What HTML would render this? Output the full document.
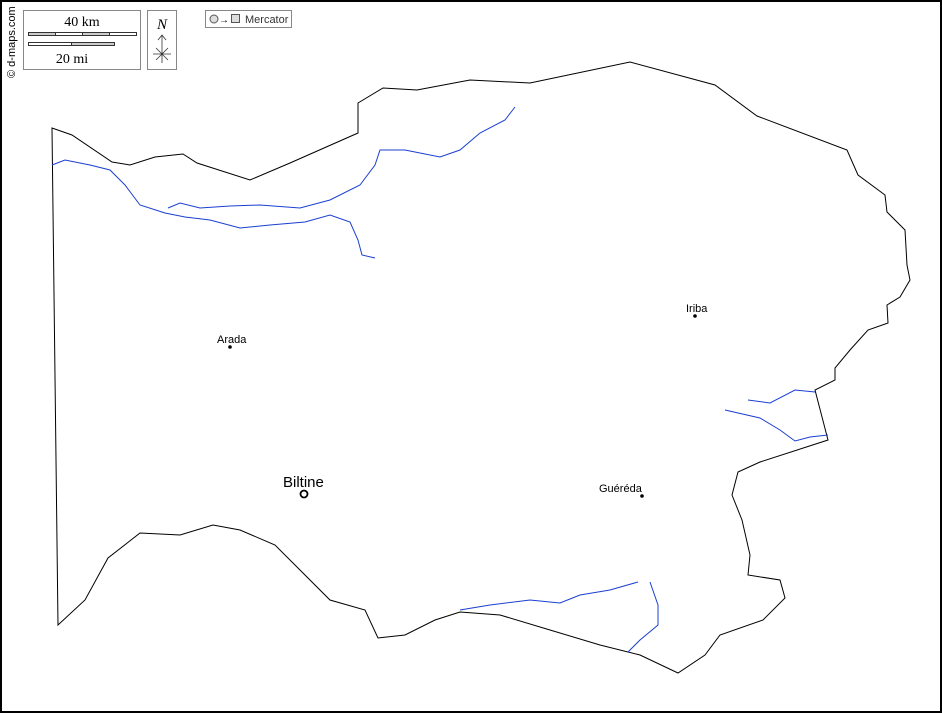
<!DOCTYPE html>
<html><head><style>
html,body{margin:0;padding:0;background:#fff}
svg{display:block}
.s{font-family:"Liberation Sans",sans-serif}
.r{font-family:"Liberation Serif",serif}
</style></head><body>
<svg width="942" height="713" viewBox="0 0 942 713" xmlns="http://www.w3.org/2000/svg">
<rect x="1" y="1" width="940" height="711" fill="#fff" stroke="#000" stroke-width="2"/>
<text class="s" transform="translate(15,78) rotate(-90)" font-size="11" fill="#000">© d-maps.com</text>
<rect x="23.5" y="10.5" width="117" height="59" fill="#fff" stroke="#888"/>
<text class="r" x="82" y="26" font-size="14" text-anchor="middle">40 km</text>
<rect x="28.5" y="32.5" width="108" height="3" fill="#fff" stroke="#333"/>
<rect x="28.5" y="32.5" width="27" height="3" fill="#ccc" stroke="#333"/>
<rect x="82.5" y="32.5" width="27" height="3" fill="#ccc" stroke="#333"/>
<rect x="28.5" y="42.5" width="86" height="3" fill="#fff" stroke="#333"/>
<rect x="71.5" y="42.5" width="43" height="3" fill="#ccc" stroke="#333"/>
<text class="r" x="72" y="63" font-size="14" text-anchor="middle">20 mi</text>
<rect x="147.5" y="10.5" width="29" height="59" fill="#fff" stroke="#888"/>
<text class="r" x="162" y="29" font-size="15" font-style="italic" text-anchor="middle">N</text>
<path d="M162 35V63M158 40L162 35L166 40M153 54L171 54M156 48L168 60M168 48L156 60" stroke="#333" fill="none" stroke-width="0.8"/>
<rect x="205.5" y="10.5" width="86" height="17" fill="#fff" stroke="#888"/>
<circle cx="214" cy="19" r="4" fill="#ddd" stroke="#555"/>
<text class="s" x="219" y="23" font-size="10">→</text>
<rect x="231.5" y="14.5" width="8" height="8" fill="#ddd" stroke="#555"/>
<text class="s" x="245" y="23" font-size="11" fill="#333">Mercator</text>
<path d="M52 128L72 135L112 162L130 165L155 157L183 154L197 163L250 180L290 163L358 133L358 103L383 88L417 90L470 80L530 83L630 62L715 85L757 116L847 150L858 175L885 195L887 212L905 230L907 265L910 280L900 297L887 305L888 323L868 330L850 350L835 368L835 380L815 390L828 440L760 462L738 472L732 495L742 520L750 555L748 575L780 580L785 598L763 620L720 635L705 655L678 673L640 655L600 645L550 630L500 615L460 612L435 620L405 635L378 638L365 610L330 600L300 570L275 545L240 530L213 525L180 535L140 533L108 558L85 600L58 625Z" fill="none" stroke="#000" stroke-width="1"/>
<g fill="none" stroke="#1a3fd0" stroke-width="1">
<path d="M52 165L65 160L90 165L110 170L125 185L140 205L165 213L185 217L210 220L240 228L270 225L305 222L330 215L350 222L358 240L362 255L375 258"/>
<path d="M168 208L180 203L200 208L230 206L260 205L300 208L330 200L360 185L375 165L380 150L405 150L440 157L460 150L480 133L505 120L515 107"/>
<path d="M748 400L770 403L795 390L815 392"/>
<path d="M725 410L760 418L780 430L795 441L810 437L828 435"/>
<path d="M460 610L490 605L530 600L560 603L580 595L610 590L638 582"/>
<path d="M650 582L658 605L658 625L640 640L628 652"/>
</g>
<text class="s" x="217" y="343" font-size="11">Arada</text><circle cx="230" cy="347" r="1.8"/>
<text class="s" x="686" y="312" font-size="11">Iriba</text><circle cx="695" cy="316" r="1.8"/>
<text class="s" x="599" y="492" font-size="11">Guéréda</text><circle cx="642" cy="496" r="1.8"/>
<text class="s" x="283" y="487" font-size="15">Biltine</text>
<circle cx="304" cy="494" r="3.5" fill="#fff" stroke="#000" stroke-width="1.8"/>
</svg>
</body></html>
